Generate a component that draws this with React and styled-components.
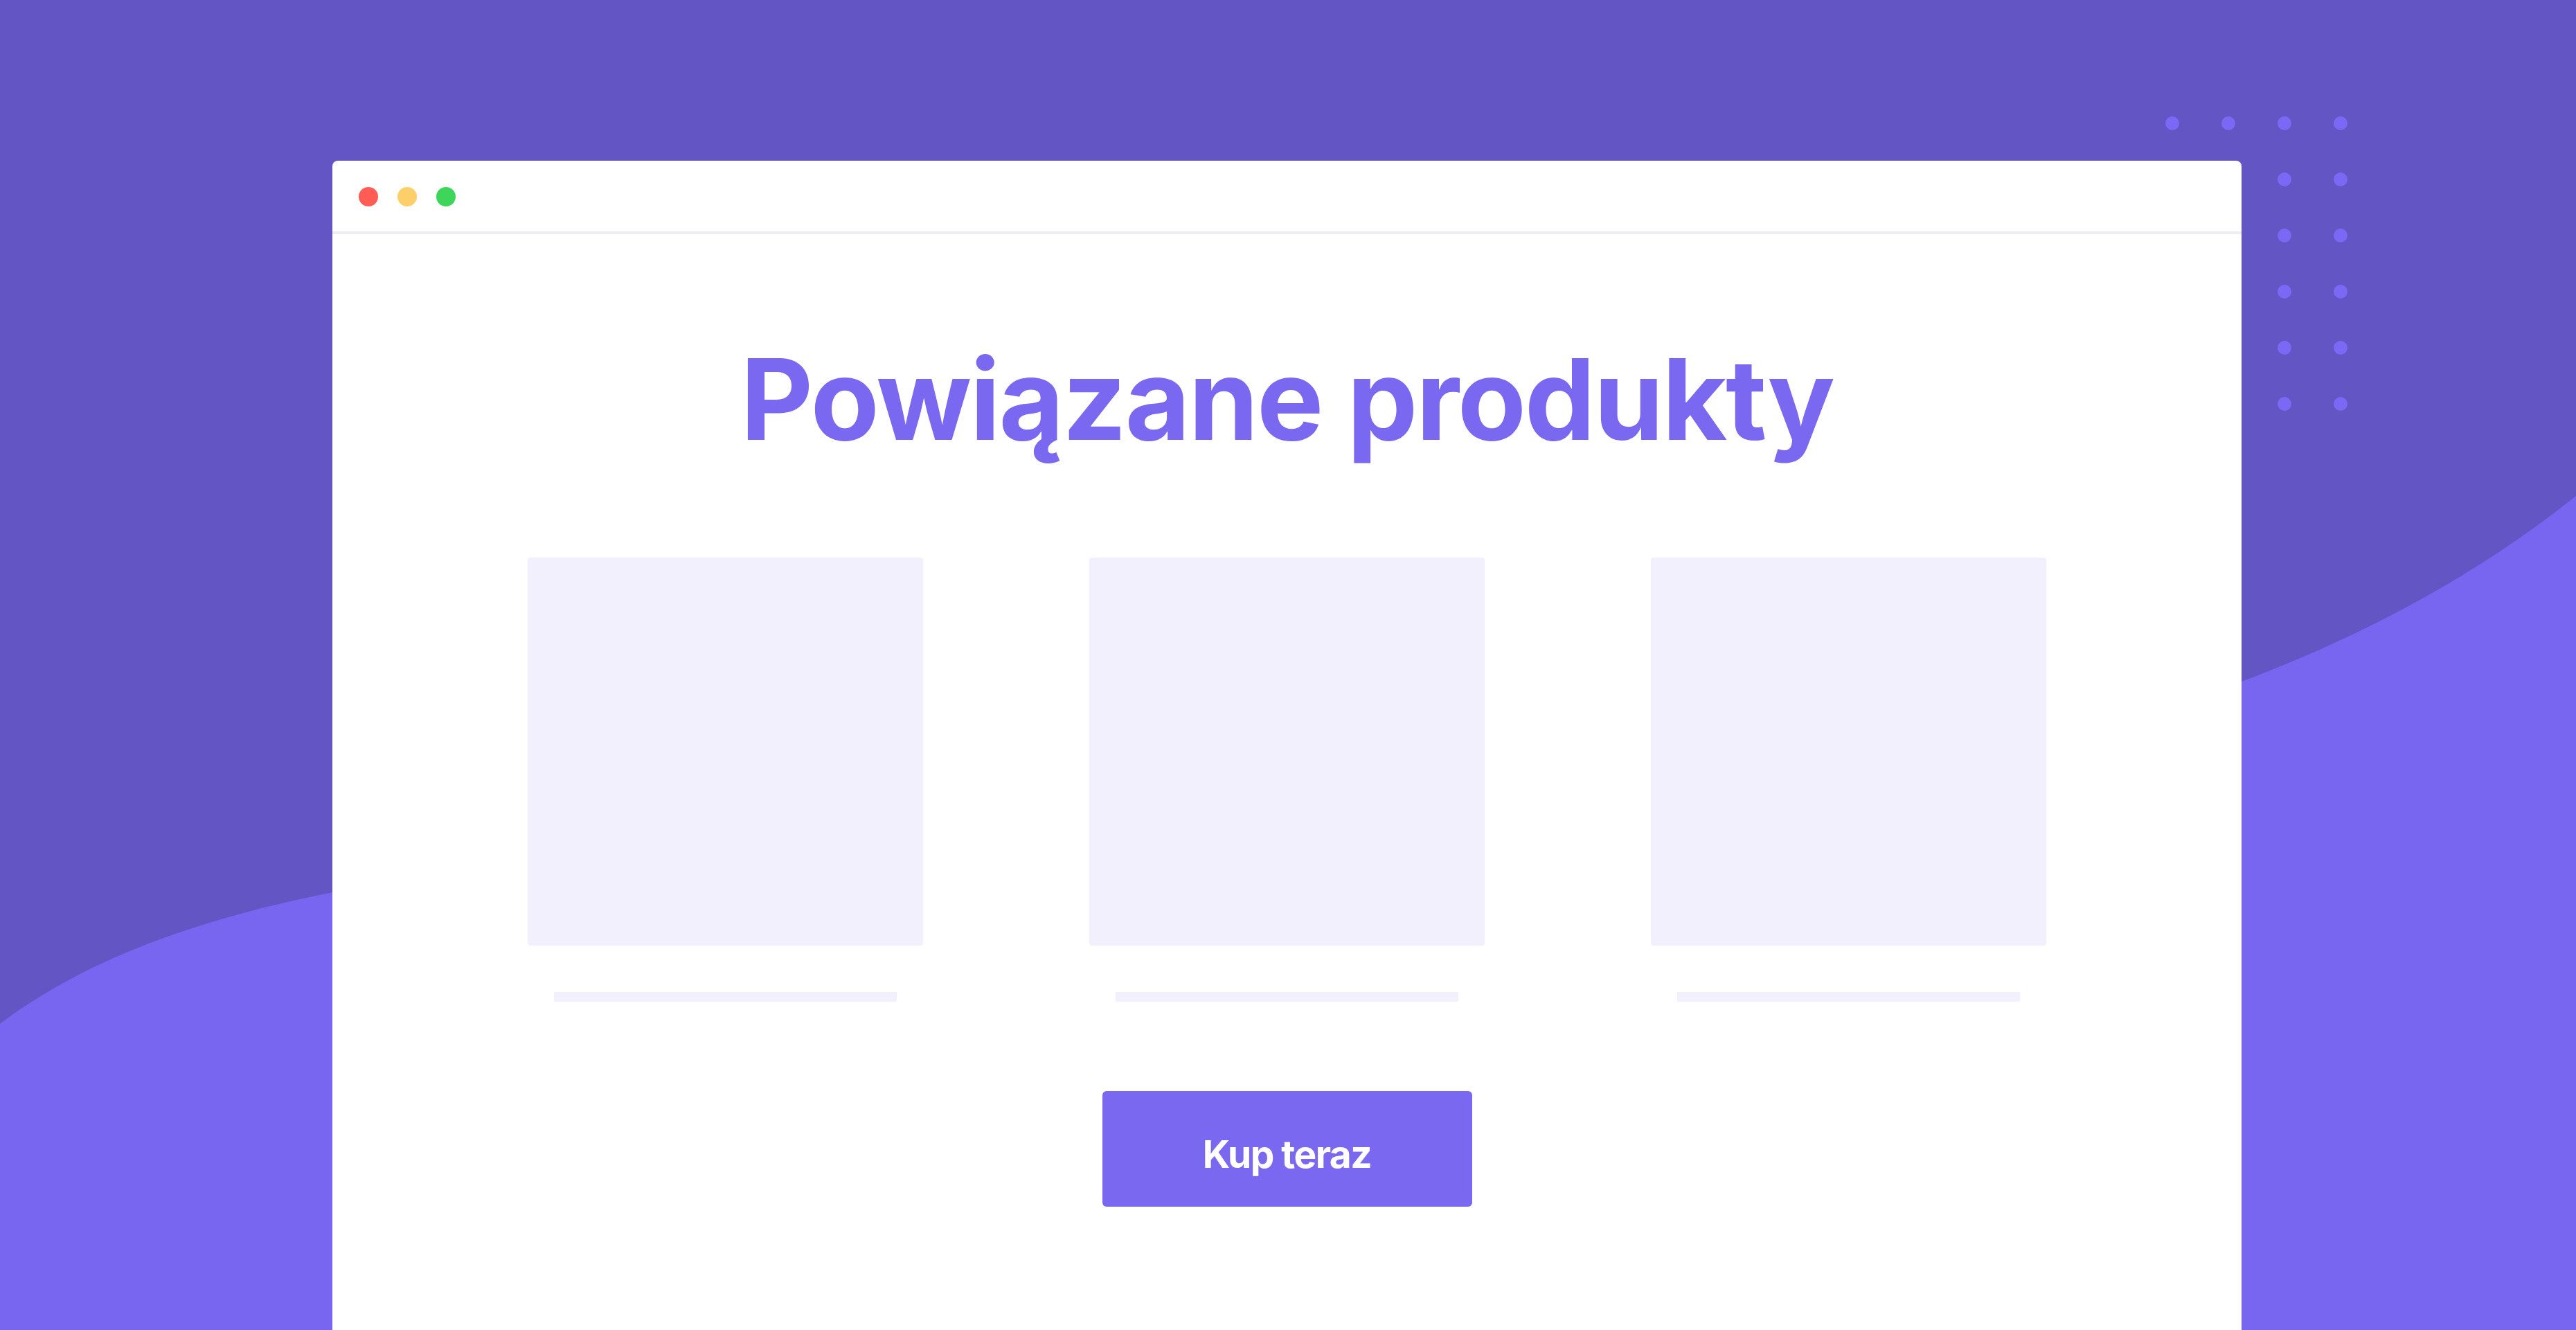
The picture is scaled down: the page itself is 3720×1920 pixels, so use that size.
import React from "react";
import styled, { createGlobalStyle } from "styled-components";

const GlobalStyle = createGlobalStyle`
  html, body {
    margin: 0;
    padding: 0;
  }
  body {
    font-family: Inter, "Noto Sans", sans-serif;
  }
`;

const products = [1, 2, 3];

export default function App() {
  return (
    <Page>
      <GlobalStyle />
      <Wave viewBox="0 0 3720 1920" preserveAspectRatio="none">
        <path
          d="M0 1478 C 700 950, 2700 1530, 3720 716 L3720 1920 L0 1920 Z"
          fill="#7866F0"
        />
      </Wave>
      <DotGrid>
        {Array.from({ length: 24 }).map((_, i) => (
          <Dot key={i} />
        ))}
      </DotGrid>
      <Window>
        <TitleBar>
          <Light color="#FE5C55" />
          <Light color="#FDCF6B" />
          <Light color="#3DD65A" />
        </TitleBar>
        <Content>
          <Title>Powiązane produkty</Title>
          <Products>
            {products.map((p) => (
              <Product key={p}>
                <Thumb />
                <NameBar />
              </Product>
            ))}
          </Products>
          <BuyButton>Kup teraz</BuyButton>
        </Content>
      </Window>
    </Page>
  );
}

const Page = styled.div`
  position: relative;
  width: 3720px;
  height: 1920px;
  overflow: hidden;
  background: #6455c5;
  padding-top: 232px;
  box-sizing: border-box;
`;

const Wave = styled.svg`
  position: absolute;
  left: 0;
  top: 0;
  width: 3720px;
  height: 1920px;
`;

const DotGrid = styled.div`
  position: absolute;
  left: 3127px;
  top: 168px;
  display: grid;
  grid-template-columns: repeat(4, 20px);
  grid-auto-rows: 20px;
  column-gap: 61px;
  row-gap: 61px;
`;

const Dot = styled.span`
  width: 20px;
  height: 20px;
  border-radius: 50%;
  background: #7b69f5;
`;

const Window = styled.div`
  position: relative;
  width: 2757px;
  height: 1688px;
  margin-left: 480px;
  background: #ffffff;
  border-radius: 8px 8px 0 0;
  display: flex;
  flex-direction: column;
`;

const TitleBar = styled.div`
  height: 100px;
  border-bottom: 4px solid #efeef6;
  display: flex;
  align-items: center;
  gap: 28px;
  padding-left: 38px;
  padding-top: 2px;
  box-sizing: content-box;
`;

const Light = styled.span`
  width: 28px;
  height: 28px;
  border-radius: 50%;
  background: ${({ color }) => color};
`;

const Content = styled.div`
  display: flex;
  flex-direction: column;
  align-items: center;
  padding-top: 157px;
`;

const Title = styled.h1`
  margin: 0;
  font-family: Inter, "Noto Sans", sans-serif;
  font-size: 162px;
  font-weight: 700;
  line-height: 1;
  letter-spacing: -2.3px;
  color: #7a68f0;
`;

const Products = styled.div`
  display: grid;
  grid-template-columns: repeat(3, 571px);
  column-gap: 240px;
  margin-top: 148px;
`;

const Product = styled.div`
  display: flex;
  flex-direction: column;
  align-items: center;
`;

const Thumb = styled.div`
  width: 571px;
  height: 560px;
  border-radius: 4px;
  background: #f1f0fc;
`;

const NameBar = styled.div`
  width: 495px;
  height: 14px;
  margin-top: 67px;
  background: #f1f0fc;
`;

const BuyButton = styled.button`
  margin-top: 129px;
  width: 534px;
  height: 167px;
  padding: 14px 0 0;
  border: none;
  border-radius: 6px;
  background: #7a68f0;
  color: #ffffff;
  font-family: Inter, "Noto Sans", sans-serif;
  font-size: 55px;
  font-weight: 700;
  letter-spacing: -1.5px;
`;
